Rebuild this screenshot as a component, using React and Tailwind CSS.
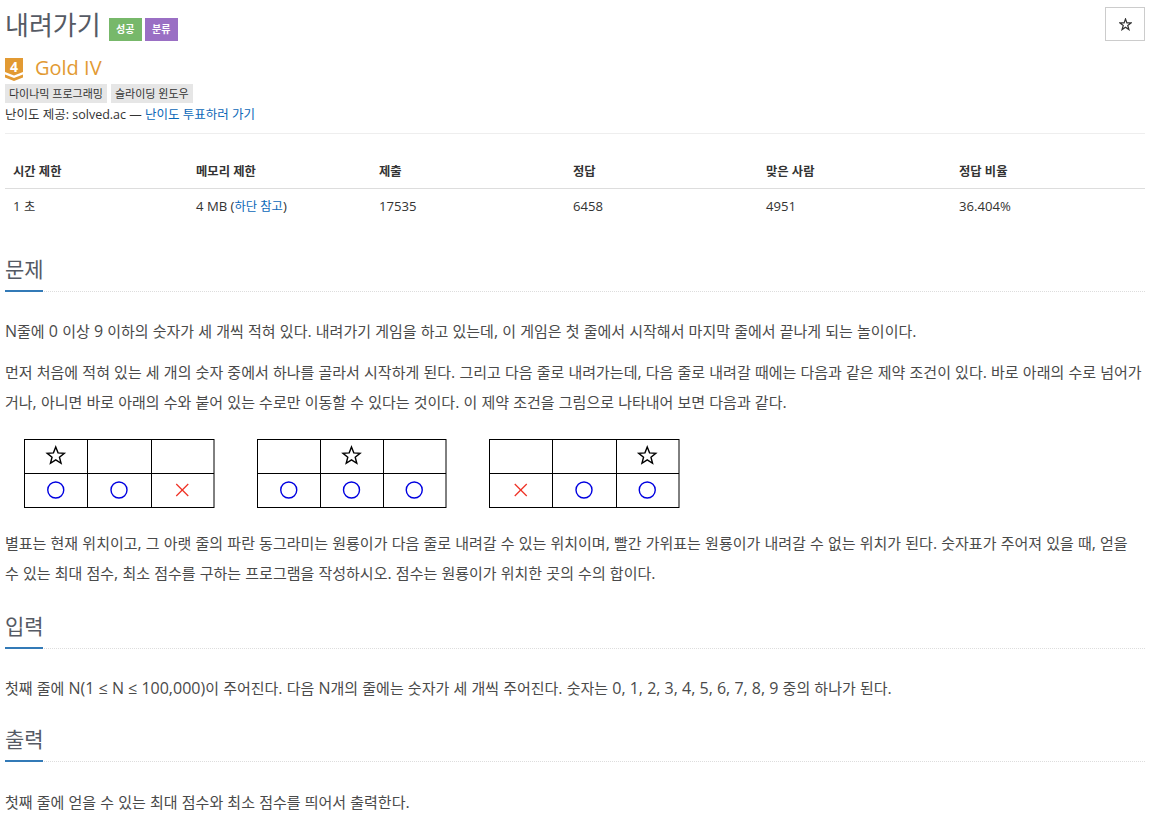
const FONT = "font-['Open_Sans','Noto_Sans_CJK_KR',sans-serif]";

function Star({ cx, cy }) {
  const pts = [];
  for (let i = 0; i < 10; i++) {
    const r = i % 2 === 0 ? 9 : 3.9;
    const a = -Math.PI / 2 + (i * Math.PI) / 5;
    pts.push(`${cx + r * Math.cos(a)},${cy + r * Math.sin(a)}`);
  }
  return <polygon points={pts.join(" ")} fill="none" stroke="#000" strokeWidth="1.4" />;
}

function Figure({ width, v1, v2, star, marks }) {
  const centers = [(0.5 + v1) / 2, (v1 + v2) / 2, (v2 + width - 0.5) / 2];
  return (
    <svg width={width + 1} height="70" className="block shrink-0">
      <rect x="0.5" y="0.5" width={width - 0.5} height="68" fill="none" stroke="#000" strokeWidth="1" />
      <line x1="0" x2={width} y1="34.5" y2="34.5" stroke="#000" />
      <line x1={v1 + 0.5} x2={v1 + 0.5} y1="0" y2="69" stroke="#000" />
      <line x1={v2 + 0.5} x2={v2 + 0.5} y1="0" y2="69" stroke="#000" />
      <Star cx={centers[star]} cy={17} />
      {marks.map((m, i) =>
        m === "o" ? (
          <circle key={i} cx={centers[i]} cy={51} r={8} fill="none" stroke="#0000e0" strokeWidth="1.4" />
        ) : (
          <g key={i} stroke="#ef3124" strokeWidth="1.2">
            <line x1={centers[i] - 6} x2={centers[i] + 6} y1={45} y2={57} />
            <line x1={centers[i] + 6} x2={centers[i] - 6} y1={45} y2={57} />
          </g>
        )
      )}
    </svg>
  );
}

// Latin runs are set a little larger than the Hangul around them, as in the reference.
function Mix({ text }) {
  return text.split(/([^\uAC00-\uD7A3]+)/).map((part, i) =>
    i % 2 === 1 ? (
      <span key={i} className="text-[1.0667em]">{part}</span>
    ) : (
      part
    )
  );
}

function Section({ title, children }) {
  return (
    <section>
      <h2 className="text-[21px] leading-[30px] text-[#555a64] font-normal">{title}</h2>
      <div className="relative mt-[7px] h-0 border-b border-dotted border-[#dddddd]">
        <div className="absolute left-0 top-[-1px] h-[2px] w-[38px] bg-[#337ab7]" />
      </div>
      {children}
    </section>
  );
}

const heads = ["시간 제한", "메모리 제한", "제출", "정답", "맞은 사람", "정답 비율"];
const widths = ["w-[183px]", "w-[183px]", "w-[194px]", "w-[193px]", "w-[193px]", "w-[194px]"];

export default function App() {
  return (
    <div className={`${FONT} h-[820px] overflow-hidden bg-white pl-[5px] pr-[8px] text-[15px] text-[#333333]`}>
      <header className="flex items-start justify-between pt-[7px]">
        <h1 className="flex items-center text-[26px] leading-[36px] font-normal text-[#555a64]">
          내려가기
          <span className="ml-[8px] mt-[8px] flex h-[23px] w-[33px] items-center justify-center bg-[#77b86a] text-[10px] font-bold text-white">성공</span>
          <span className="ml-[3px] mt-[8px] flex h-[23px] w-[33px] items-center justify-center bg-[#9a6fc4] text-[10px] font-bold text-white">분류</span>
        </h1>
        <button className="flex h-[34px] w-[40px] items-center justify-center border border-[#cccccc]">
          <svg width="13" height="13" viewBox="0 0 14 14">
            <polygon points="7,1 8.5,5.2 13,5.3 9.4,8 10.7,12.5 7,9.9 3.3,12.5 4.6,8 1,5.3 5.5,5.2" fill="none" stroke="#333" strokeWidth="1.3" />
          </svg>
        </button>
      </header>

      <div className="mt-[12px] flex items-center">
        <span className="relative mt-[3px] block h-[23px] w-[19px] shrink-0">
          <svg width="19" height="23" viewBox="0 0 19 23" className="block">
            <path d="M0 0H18V14L9 17.5L0 14Z" fill="#e29a33" />
            <path d="M0 16.5L9 20L18 16.5V19.5L9 23L0 19.5Z" fill="#e29a33" />
          </svg>
          <span className="absolute left-0 top-0 w-[18px] text-center text-[14px] leading-[18px] font-bold text-white">4</span>
        </span>
        <span className="ml-[11px] text-[20px] leading-[26px] text-[#e29a33]">Gold IV</span>
      </div>
      <div className="mt-[3px] flex gap-[4px] text-[11px] leading-[19px] text-[#333]">
        <span className="bg-[#e6e6e6] px-[4px]">다이나믹 프로그래밍</span>
        <span className="bg-[#e6e6e6] px-[4px]">슬라이딩 윈도우</span>
      </div>
      <p className="mt-[2px] text-[12.5px] leading-[20px]">
        난이도 제공: solved.ac — <a className="text-[#0c68b8]">난이도 투표하러 가기</a>
      </p>

      <div className="mt-[8px] border-t border-[#eeeeee]" />
      <table className="mt-[22px] w-[1140px] table-fixed border-collapse text-[12.3px]">
        <thead>
          <tr className="border-b border-[#dddddd]">
            {heads.map((h, i) => (
              <th key={h} className={`${widths[i]} h-[32px] px-[8px] text-left font-bold`}>{h}</th>
            ))}
          </tr>
        </thead>
        <tbody>
          <tr>
            <td className="h-[37px] px-[8px]"><Mix text="1 초" /></td>
            <td className="px-[8px]"><Mix text="4 MB (" /><a className="text-[#0c68b8]">하단 참고</a><Mix text=")" /></td>
            <td className="px-[8px]"><Mix text="17535" /></td>
            <td className="px-[8px]"><Mix text="6458" /></td>
            <td className="px-[8px]"><Mix text="4951" /></td>
            <td className="px-[8px]"><Mix text="36.404%" /></td>
          </tr>
        </tbody>
      </table>

      <div className="mt-[29px] text-[#4a4a4a]">
        <Section title="문제">
          <p className="mt-[26px] leading-[26px]"><Mix text="N줄에 0 이상 9 이하의 숫자가 세 개씩 적혀 있다. 내려가기 게임을 하고 있는데, 이 게임은 첫 줄에서 시작해서 마지막 줄에서 끝나게 되는 놀이이다." /></p>
          <p className="mt-[13px] leading-[30px]"><Mix text="먼저 처음에 적혀 있는 세 개의 숫자 중에서 하나를 골라서 시작하게 된다. 그리고 다음 줄로 내려가는데, 다음 줄로 내려갈 때에는 다음과 같은 제약 조건이 있다. 바로 아래의 수로 넘어가거나, 아니면 바로 아래의 수와 붙어 있는 수로만 이동할 수 있다는 것이다. 이 제약 조건을 그림으로 나타내어 보면 다음과 같다." /></p>
          <div className="ml-[19px] mt-[22px] flex gap-[42px]">
            <Figure width={190} v1={63} v2={127} star={0} marks={["o", "o", "x"]} />
            <Figure width={189} v1={63} v2={126} star={1} marks={["o", "o", "o"]} />
            <Figure width={190} v1={63} v2={127} star={2} marks={["x", "o", "o"]} />
          </div>
          <p className="mt-[19px] leading-[30px]"><Mix text="별표는 현재 위치이고, 그 아랫 줄의 파란 동그라미는 원룡이가 다음 줄로 내려갈 수 있는 위치이며, 빨간 가위표는 원룡이가 내려갈 수 없는 위치가 된다. 숫자표가 주어져 있을 때, 얻을 수 있는 최대 점수, 최소 점수를 구하는 프로그램을 작성하시오. 점수는 원룡이가 위치한 곳의 수의 합이다." /></p>
        </Section>
        <div className="mt-[23px]">
          <Section title="입력">
            <p className="mt-[26px] leading-[26px]"><Mix text="첫째 줄에 N(1 ≤ N ≤ 100,000)이 주어진다. 다음 N개의 줄에는 숫자가 세 개씩 주어진다. 숫자는 0, 1, 2, 3, 4, 5, 6, 7, 8, 9 중의 하나가 된다." /></p>
          </Section>
        </div>
        <div className="mt-[23px]">
          <Section title="출력">
            <p className="mt-[27px] leading-[26px]"><Mix text="첫째 줄에 얻을 수 있는 최대 점수와 최소 점수를 띄어서 출력한다." /></p>
          </Section>
        </div>
      </div>
    </div>
  );
}
